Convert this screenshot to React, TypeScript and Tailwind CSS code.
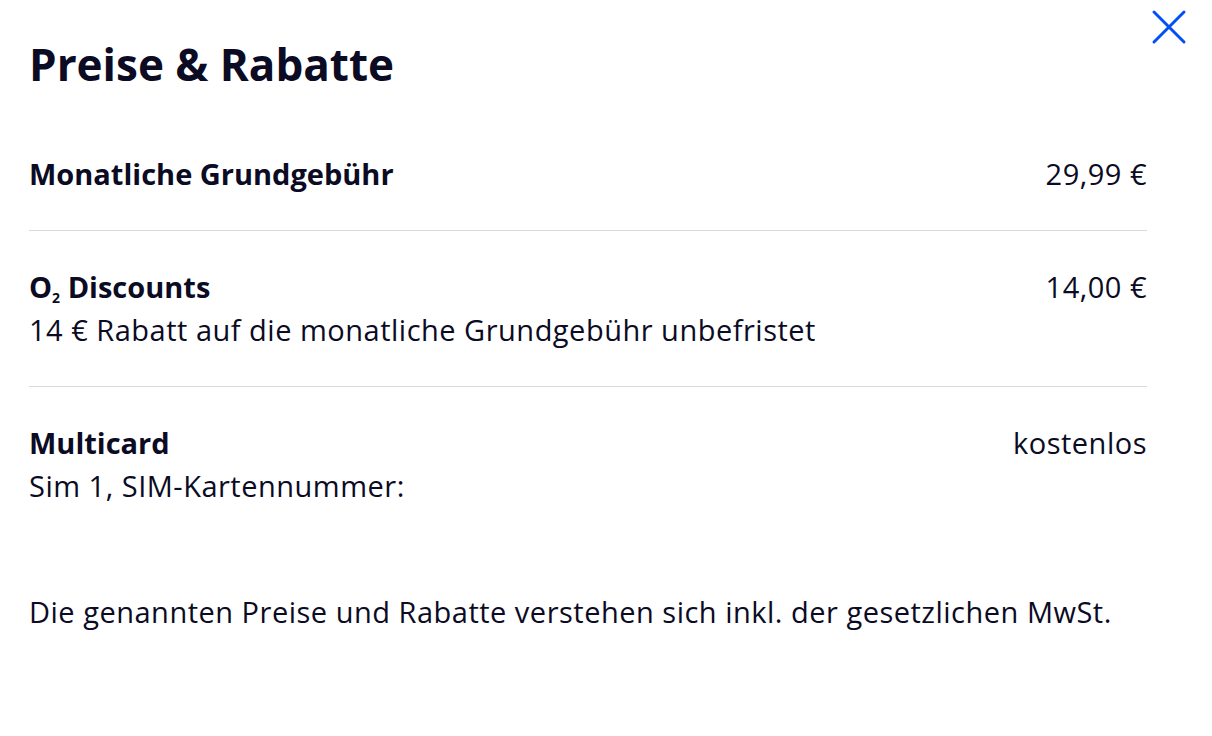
const rows = [
  { title: "Monatliche Grundgebühr", price: "29,99 €" },
  {
    title: "O2 Discounts",
    price: "14,00 €",
    sub: "14 € Rabatt auf die monatliche Grundgebühr unbefristet",
  },
  { title: "Multicard", price: "kostenlos", sub: "Sim 1, SIM-Kartennummer:" },
];

const Title = ({ text }: { text: string }) => {
  if (text.startsWith("O2 ")) {
    return (
      <span>
        O<span className="text-[14px] leading-[0] align-[-5px]">2</span>
        {text.slice(2)}
      </span>
    );
  }
  return <span>{text}</span>;
};

const App = () => {
  return (
    <div className="relative min-h-[736px] w-[1212px] bg-white text-[#0b0b24] [font-family:'Open_Sans','Noto_Sans',sans-serif]">
      <button className="absolute right-[25px] top-[9px] p-0 text-[#0050f5]" aria-label="Schließen">
        <svg width="36" height="36" viewBox="0 0 36 36" fill="none" stroke="currentColor" strokeWidth="3" strokeLinecap="round">
          <path d="M3 3 L33 33 M33 3 L3 33" />
        </svg>
      </button>

      <div className="pl-[29px] pr-[65px] pt-[38px]">
        <h1 className="mb-[28px] text-[44px] font-bold leading-[52px]">Preise &amp; Rabatte</h1>

        {rows.map((row, i) => (
          <div
            key={row.title}
            className={`py-[36px] ${i < rows.length - 1 ? "border-b border-[#d9d9dc]" : ""}`}
          >
            <div className="flex items-baseline justify-between text-[29px] leading-[40px]">
              <span className="font-bold">
                <Title text={row.title} />
              </span>
              <span className="tracking-[0.5px]">{row.price}</span>
            </div>
            {row.sub && <p className="mt-[3px] text-[29px] leading-[40px] tracking-[0.5px]">{row.sub}</p>}
          </div>
        ))}

        <p className="mt-[50px] text-[29px] leading-[40px] tracking-[0.5px]">
          Die genannten Preise und Rabatte verstehen sich inkl. der gesetzlichen MwSt.
        </p>
      </div>
    </div>
  );
};

export default App;
